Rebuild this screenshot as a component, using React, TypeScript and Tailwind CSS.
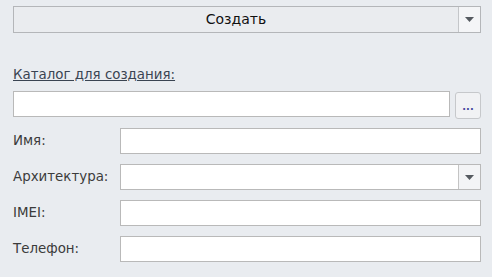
import React from "react";

function Arrow() {
  return (
    <svg width="9" height="5" viewBox="0 0 9 5">
      <path d="M0 0 H9 L4.5 5 Z" fill="#555a60" />
    </svg>
  );
}

function Row({ label, combo }: { label: string; combo?: boolean }) {
  return (
    <div className="flex items-center h-[26px]">
      <span className="w-[107px] text-[#3b3b3b]">{label}</span>
      <div className="flex-1 flex h-full bg-white border border-[#b9b9b9]">
        <div className="flex-1" />
        {combo && (
          <div className="w-[22px] flex items-center justify-center border-l border-[#c4c4c4] bg-[#f3f4f6]">
            <Arrow />
          </div>
        )}
      </div>
    </div>
  );
}

export default function App() {
  return (
    <div
      className="w-[492px] h-[277px] bg-[#e9ecf0] pl-[13px] pr-[11px] pt-[6px] text-[13.4px]"
      style={{ fontFamily: '"DejaVu Sans", "Noto Sans", sans-serif' }}
    >
      {/* top combo button */}
      <div className="flex h-[27px] border border-[#b4b6b9] bg-[#eaecef]">
        <div className="flex-1 flex items-center justify-center text-[#111] text-[14px]">Создать</div>
        <div className="w-[22px] flex items-center justify-center border-l border-[#c4c6c9] bg-[#f4f5f7]">
          <Arrow />
        </div>
      </div>

      <div className="mt-[35px] text-[#3a4452] underline leading-[14px]">Каталог для создания:</div>

      <div className="flex mt-[9px] h-[26px] gap-[5px]">
        <div className="flex-1 bg-white border border-[#b9b9b9]" />
        <div className="w-[26px] h-[27px] mt-[1px] rounded-[3px] border border-[#c6c8cb] bg-[#f1f2f4] flex items-center justify-center text-[#4a4aa0] text-[10px] font-bold leading-none pt-[3px]">
          ...
        </div>
      </div>

      <div className="flex flex-col gap-[10px] mt-[11px]">
        <Row label="Имя:" />
        <Row label="Архитектура:" combo />
        <Row label="IMEI:" />
        <Row label="Телефон:" />
      </div>
    </div>
  );
}
